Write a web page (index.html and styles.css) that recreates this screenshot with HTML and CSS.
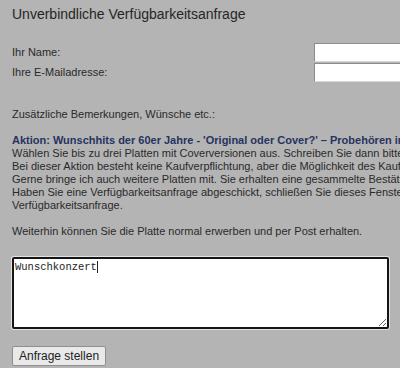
FILE: index.html
```html
<!DOCTYPE html>
<html lang="de">

<head>
    <meta charset="UTF-8">
    <meta name="viewport" content="width=device-width, initial-scale=1.0">
    <title>Verfügbarkeitsanfrage</title>
    <link rel="stylesheet" href="styles.css">
</head>

<body>

    <div class="request">
        <h1 class="request-title">Unverbindliche Verfügbarkeitsanfrage</h1>

        <div class="field-rows">
            <label class="field-label" for="name">Ihr Name:</label>
            <input class="field-input" type="text" id="name">
            <label class="field-label" for="mail">Ihre E-Mailadresse:</label>
            <input class="field-input" type="email" id="mail">
        </div>

        <p class="remarks-label">Zusätzliche Bemerkungen, Wünsche etc.:</p>

        <div class="offer">
            <div class="offer-line offer-head">Aktion: Wunschhits der 60er Jahre - 'Original oder Cover?' – Probehören im Laden</div>
            <div class="offer-line">Wählen Sie bis zu drei Platten mit Coverversionen aus. Schreiben Sie dann bitte die Titel in das Feld unten.</div>
            <div class="offer-line">Bei dieser Aktion besteht keine Kaufverpflichtung, aber die Möglichkeit des Kaufs vor Ort.</div>
            <div class="offer-line">Gerne bringe ich auch weitere Platten mit. Sie erhalten eine gesammelte Bestätigung per E-Mail.</div>
            <div class="offer-line">Haben Sie eine Verfügbarkeitsanfrage abgeschickt, schließen Sie dieses Fenster und starten Sie eine neue</div>
            <div class="offer-line">Verfügbarkeitsanfrage.</div>
        </div>

        <p class="offer-note">Weiterhin können Sie die Platte normal erwerben und per Post erhalten.</p>

        <div class="remarks-box">
            <textarea class="remarks" id="remarks">Wunschkonzert</textarea>
            <span class="caret"></span>
        </div>

        <button class="submit" type="button">Anfrage stellen</button>
    </div>

</body>

</html>
```

FILE: styles.css
```css
html,
body {
    overflow: hidden;
}

body {
    margin: 0;
    background-color: #b4b4b4;
    font-family: 'Liberation Sans', Arial, sans-serif;
    font-size: 11px;
    line-height: 13px;
    color: #2a2a2a;
}

.request {
    padding: 0 12px;
}

.request-title {
    font-size: 14px;
    font-weight: normal;
    color: #262626;
    margin: 0;
    padding-top: 6px;
    line-height: 17px;
}

.field-rows {
    display: grid;
    grid-template-columns: 302px 200px;
    row-gap: 1px;
    align-items: center;
    margin-top: 20px;
}

.field-input {
    height: 19px;
    box-sizing: border-box;
    border: 1px solid;
    border-color: #8c8c8c #d8d8d8 #d8d8d8 #8c8c8c;
    background: #fff;
    padding: 0 3px;
}

.remarks-label {
    margin: 26px 0 0;
}

.offer {
    margin-top: 13px;
}

.offer-line {
    white-space: nowrap;
}

.offer-head {
    font-weight: bold;
    color: #27335f;
}

.offer-note {
    margin: 13px 0 0;
}

.remarks-box {
    position: relative;
    margin-top: 19px;
    width: 377px;
}

.remarks {
    display: block;
    box-sizing: border-box;
    width: 377px;
    height: 72px;
    border: 2px solid #151515;
    border-radius: 2px;
    box-shadow: 0 0 0 1px #e2e2e2;
    padding: 2px 1px;
    font-family: 'Liberation Mono', 'Courier New', monospace;
    font-size: 10.5px;
    line-height: 13px;
    color: #222;
    resize: both;
    outline: none;
}

.caret {
    position: absolute;
    left: 85px;
    top: 4px;
    width: 1px;
    height: 12px;
    background: #222;
}

.submit {
    display: block;
    margin-top: 17px;
    font-family: 'Liberation Sans', Arial, sans-serif;
    font-size: 12px;
    color: #222;
    background: #e9e9e9;
    border: 1px solid #8f8f8f;
    border-radius: 2px;
    padding: 0 6px;
    height: 20px;
    line-height: 18px;
}
```
